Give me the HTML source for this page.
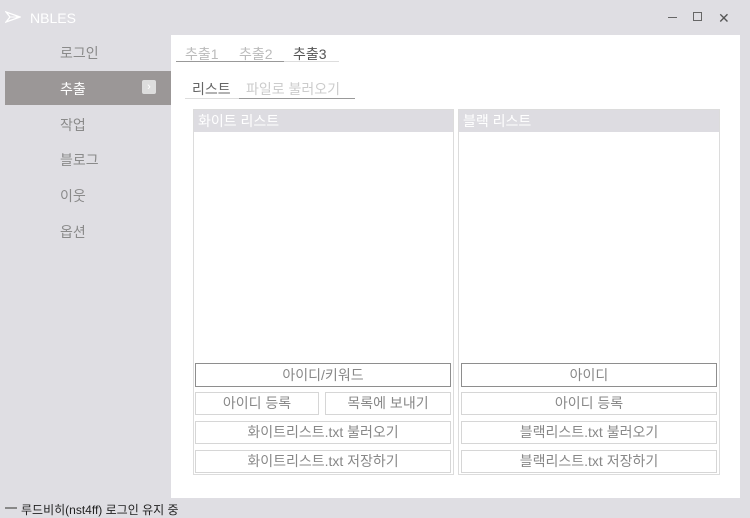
<!DOCTYPE html>
<html><head><meta charset="utf-8"><style>
*{margin:0;padding:0;box-sizing:border-box}
body{width:750px;height:518px;background:#dfdee3;font-family:"Liberation Sans","Noto Sans CJK KR",sans-serif;position:relative;overflow:hidden;color:#888}
.a{position:absolute}
.nav{position:absolute;left:60px;font-size:14px;color:#8a8a8a}
.btn{position:absolute;border:1px solid #d6d6d6;background:#fff;font-size:14px;color:#888;text-align:center;line-height:20px}
.box{position:absolute;border:1px solid #dcdcdc;background:#fff;top:109px;height:366px}
.hd{height:22px;background:#dddce1;color:#fff;font-size:14px;line-height:22px;padding-left:4px}
</style></head><body>
<svg class="a" style="left:5px;top:11px" width="16" height="12" viewBox="0 0 16 12"><path d="M1 1 L15 6 L1 11 L5 6 Z" fill="none" stroke="#fff" stroke-width="1.3"/><path d="M5 6 H15" stroke="#fff"/></svg>
<div class="a" style="left:30px;top:10px;font-size:14px;color:#fff">NBLES</div>
<div class="a" style="left:668px;top:17px;width:9px;height:1px;background:#666"></div>
<div class="a" style="left:693px;top:12px;width:9px;height:9px;border:1px solid #666"></div>
<div class="a" style="left:718px;top:10px;font-size:14px;color:#555">✕</div>
<div class="nav" style="top:43px">로그인</div>
<div class="a" style="left:5px;top:71px;width:166px;height:34px;background:#9b9797"></div>
<div class="nav" style="top:79px;color:#fff">추출</div>
<div class="a" style="left:142px;top:80px;width:14px;height:14px;background:#ddd;border-radius:2px;color:#fff;font-size:11px;line-height:14px;text-align:center">›</div>
<div class="nav" style="top:115px">작업</div>
<div class="nav" style="top:150px">블로그</div>
<div class="nav" style="top:186px">이웃</div>
<div class="nav" style="top:222px">옵션</div>
<div class="a" style="left:171px;top:35px;width:569px;height:463px;background:#fff"></div>
<div class="a" style="left:185px;top:44px;font-size:14px;color:#bbb">추출1</div>
<div class="a" style="left:239px;top:44px;font-size:14px;color:#bbb">추출2</div>
<div class="a" style="left:293px;top:44px;font-size:14px;color:#555">추출3</div>
<div class="a" style="left:176px;top:61px;width:163px;height:1px;background:#ddd"></div>
<div class="a" style="left:176px;top:61px;width:108px;height:1px;background:#999"></div>
<div class="a" style="left:192px;top:79px;font-size:14px;color:#666">리스트</div>
<div class="a" style="left:246px;top:79px;font-size:14px;color:#ccc">파일로 불러오기</div>
<div class="a" style="left:185px;top:98px;width:170px;height:1px;background:#999"></div>
<div class="a" style="left:185px;top:98px;width:54px;height:1px;background:#ddd"></div>
<div class="box" style="left:193px;width:261px"><div class="hd">화이트 리스트</div></div>
<div class="box" style="left:458px;width:262px"><div class="hd">블랙 리스트</div></div>
<div class="btn" style="left:195px;top:363px;width:256px;height:24px;border-color:#8e8e8e;line-height:22px">아이디/키워드</div>
<div class="btn" style="left:195px;top:392px;width:124px;height:23px">아이디 등록</div>
<div class="btn" style="left:325px;top:392px;width:126px;height:23px">목록에 보내기</div>
<div class="btn" style="left:195px;top:421px;width:256px;height:23px">화이트리스트.txt 불러오기</div>
<div class="btn" style="left:195px;top:450px;width:256px;height:23px">화이트리스트.txt 저장하기</div>
<div class="btn" style="left:461px;top:363px;width:256px;height:24px;border-color:#8e8e8e;line-height:22px">아이디</div>
<div class="btn" style="left:461px;top:392px;width:256px;height:23px">아이디 등록</div>
<div class="btn" style="left:461px;top:421px;width:256px;height:23px">블랙리스트.txt 불러오기</div>
<div class="btn" style="left:461px;top:450px;width:256px;height:23px">블랙리스트.txt 저장하기</div>
<div class="a" style="left:5px;top:507px;width:12px;height:2px;background:#888"></div>
<div class="a" style="left:21px;top:501px;font-size:12px;color:#222">루드비히(nst4ff) 로그인 유지 중</div>
</body></html>
